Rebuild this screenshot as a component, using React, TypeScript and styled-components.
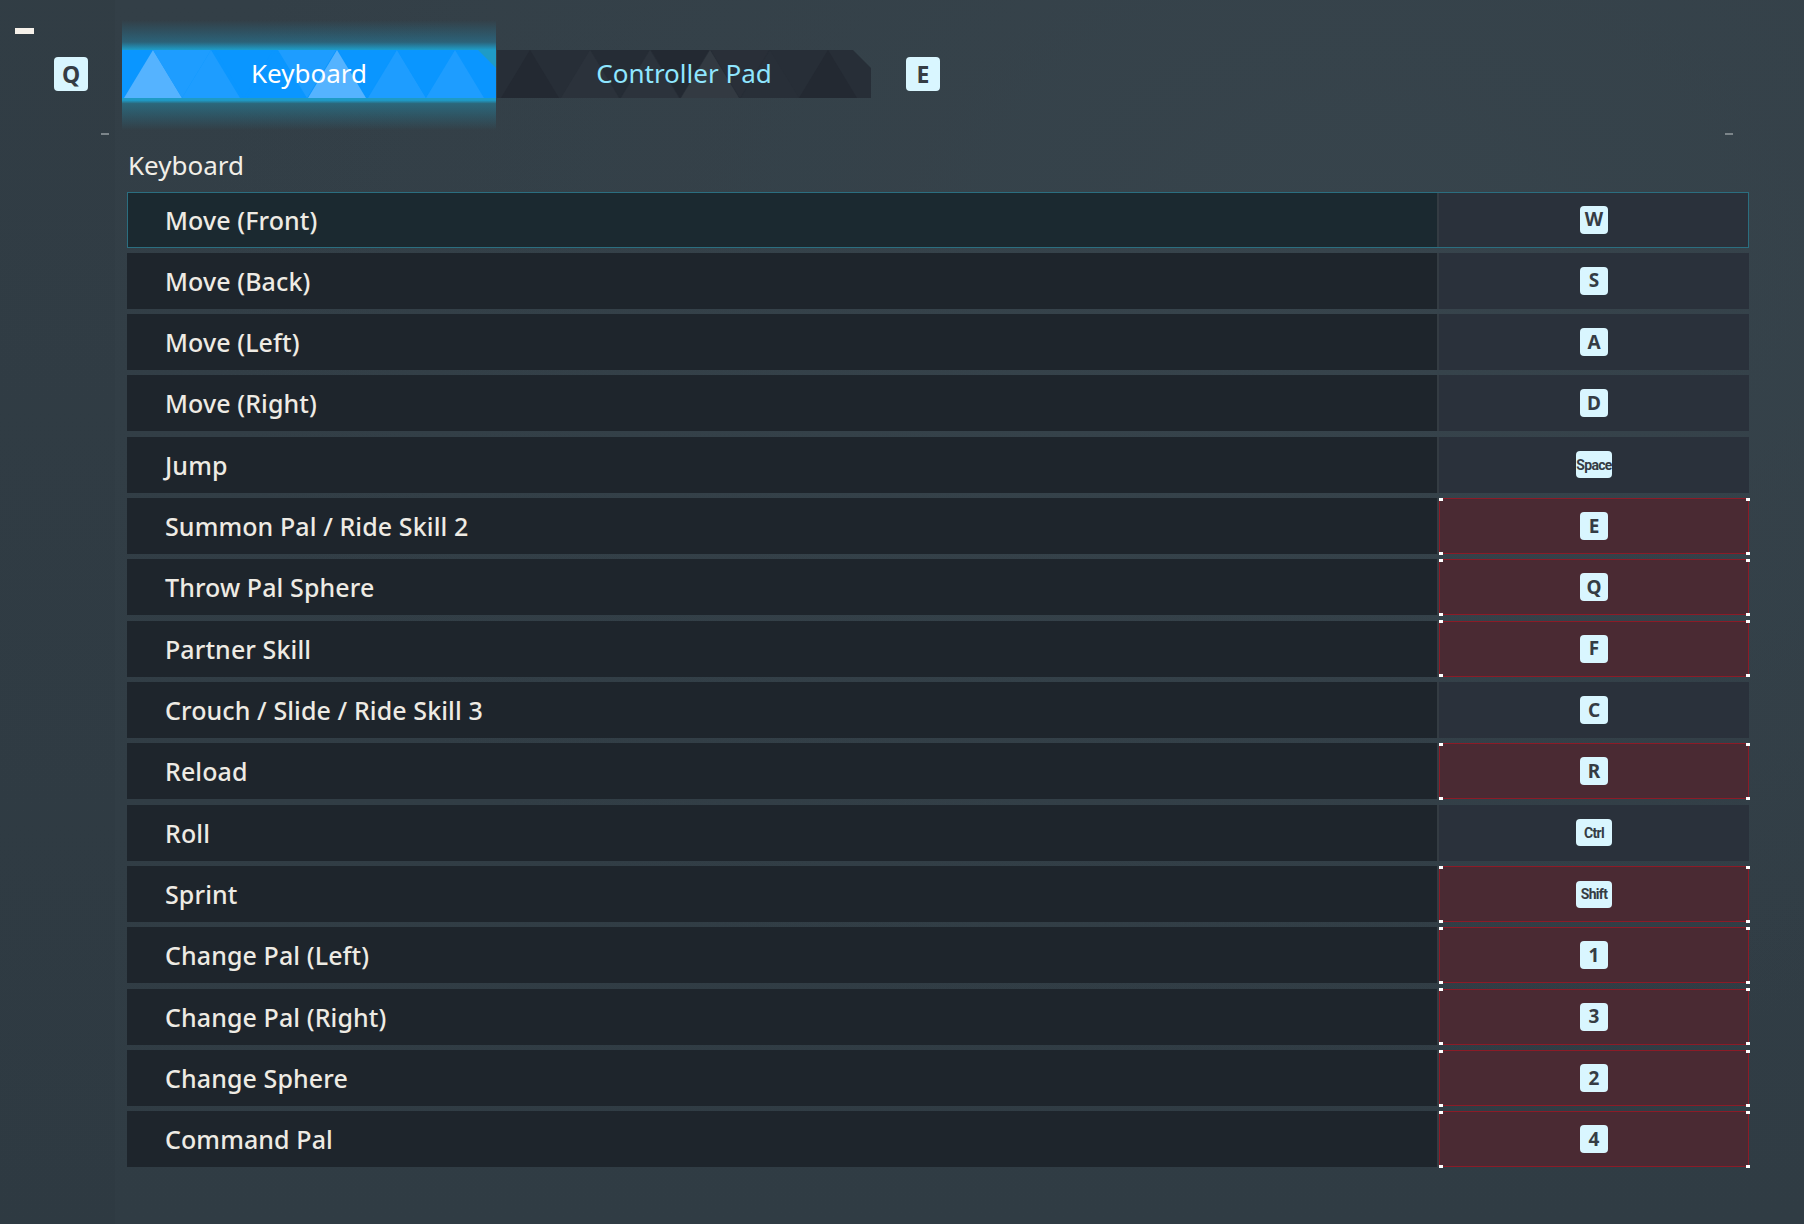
import React from "react";
import styled, { createGlobalStyle } from "styled-components";

interface Binding {
  label: string;
  key: string;
  conflict?: boolean;
}

const bindings: Binding[] = [
  { label: "Move (Front)", key: "W" },
  { label: "Move (Back)", key: "S" },
  { label: "Move (Left)", key: "A" },
  { label: "Move (Right)", key: "D" },
  { label: "Jump", key: "Space" },
  { label: "Summon Pal / Ride Skill 2", key: "E", conflict: true },
  { label: "Throw Pal Sphere", key: "Q", conflict: true },
  { label: "Partner Skill", key: "F", conflict: true },
  { label: "Crouch / Slide / Ride Skill 3", key: "C" },
  { label: "Reload", key: "R", conflict: true },
  { label: "Roll", key: "Ctrl" },
  { label: "Sprint", key: "Shift", conflict: true },
  { label: "Change Pal (Left)", key: "1", conflict: true },
  { label: "Change Pal (Right)", key: "3", conflict: true },
  { label: "Change Sphere", key: "2", conflict: true },
  { label: "Command Pal", key: "4", conflict: true },
];

// triangle strip behind a tab: [apex x, fill, pointing up]
type Tri = [number, string, boolean];

const activeTris: Tri[] = [
  [31, "#55b3ff", true],
  [60, "#1e9dff", false],
  [89, "#1e9dff", true],
  [122, "#0a96ff", false],
  [154, "#0a96ff", true],
  [185, "#1e9dff", false],
  [215, "#55b3ff", true],
  [245, "#0a96ff", false],
  [275, "#1e9dff", true],
  [304, "#0a96ff", false],
  [333, "#1e9dff", true],
];

const idleTris: Tri[] = [
  [33, "#232932", true],
  [93, "#2b323b", true],
  [123, "#252c35", false],
  [153, "#2c333c", true],
  [183, "#232932", false],
  [213, "#333a42", true],
  [243, "#292f38", false],
  [273, "#282f38", true],
  [331, "#232932", true],
];

const GlobalStyle = createGlobalStyle`
  html, body {
    margin: 0;
    padding: 0;
    background: #313d45;
  }
  body {
    font-family: "Noto Sans", "Open Sans", sans-serif;
  }
`;

const Page = styled.div`
  width: 1804px;
  height: 1224px;
  box-sizing: border-box;
  padding-top: 28px;
  display: flex;
  flex-direction: column;
  overflow: hidden;
  background:
    linear-gradient(90deg, rgba(0, 0, 0, 0.035) 0 115px, transparent 115px),
    radial-gradient(ellipse at 75% 20%, #37444c 0%, transparent 60%),
    linear-gradient(180deg, #333f47 0%, #303c44 100%);
`;

const TopDash = styled.div`
  width: 19px;
  height: 6px;
  margin-left: 15px;
  background: #f6f1ea;
`;

const TabBar = styled.div`
  display: flex;
  align-items: center;
  height: 48px;
  margin-top: 16px;
  padding-left: 54px;
`;

const KeyCap = styled.span<{ $size: "lg" | "md" | "wide" }>`
  display: inline-flex;
  align-items: center;
  justify-content: center;
  box-sizing: border-box;
  width: ${(p) => (p.$size === "lg" ? 34 : p.$size === "wide" ? 36 : 28)}px;
  height: ${(p) => (p.$size === "lg" ? 34 : p.$size === "wide" ? 27 : 28)}px;
  border-radius: 4px;
  background: #d9f6ff;
  color: #353c44;
  font-family: ${(p) =>
    p.$size === "wide" ? `Roboto, "Noto Sans", sans-serif` : `"Noto Sans", sans-serif`};
  font-weight: 700;
  font-size: ${(p) => (p.$size === "lg" ? 23 : p.$size === "wide" ? 14 : 19)}px;
  letter-spacing: ${(p) => (p.$size === "wide" ? -0.7 : 0)}px;
  line-height: 1;
  white-space: nowrap;
  overflow: hidden;
`;

const Tabs = styled.div`
  display: flex;
  gap: 1px;
  margin: 0 35px 0 34px;
`;

const Tab = styled.div<{ $active?: boolean }>`
  position: relative;
  width: 374px;
  height: 48px;
  display: flex;
  align-items: center;
  justify-content: center;

  &::before {
    content: "";
    position: absolute;
    left: 0;
    right: 0;
    top: -30px;
    bottom: -32px;
    display: ${(p) => (p.$active ? "block" : "none")};
    background: linear-gradient(
      180deg,
      rgba(40, 150, 190, 0) 0%,
      rgba(34, 140, 180, 0.45) 20%,
      #1f9bc6 27%,
      #1f9bc6 73%,
      rgba(40, 120, 145, 0.7) 76%,
      rgba(50, 90, 105, 0) 100%
    );
  }
`;

const TabFace = styled.div<{ $active?: boolean }>`
  position: absolute;
  inset: 0;
  background: ${(p) => (p.$active ? "#0a96ff" : "#272e37")};
  clip-path: polygon(0 0, calc(100% - 18px) 0, 100% 18px, 100% 100%, 0 100%);

  svg {
    display: block;
    width: 100%;
    height: 100%;
  }
`;

const TabLabel = styled.span<{ $active?: boolean }>`
  position: relative;
  top: -1px;
  font-size: 26px;
  font-weight: 400;
  color: ${(p) => (p.$active ? "#ffffff" : "#8fe6ff")};
`;

const TickRow = styled.div`
  display: flex;
  justify-content: space-between;
  margin: 35px 0 0;
  padding: 0 71px 0 101px;
`;

const Tick = styled.span`
  width: 8px;
  height: 2px;
  background: #7c858a;
`;

const Panel = styled.section`
  display: flex;
  flex-direction: column;
  padding: 0 55px 0 127px;
`;

const Heading = styled.h2`
  margin: 14px 0 10.5px 1px;
  font-size: 26px;
  line-height: 32px;
  font-weight: 400;
  color: #f1eee7;
`;

const Rows = styled.div`
  display: flex;
  flex-direction: column;
  gap: 5.33px;
`;

const Row = styled.div<{ $selected?: boolean }>`
  position: relative;
  display: flex;
  gap: 2px;
  height: 56px;
  background: #343c43;

  &::after {
    content: "";
    position: absolute;
    inset: 0;
    display: ${(p) => (p.$selected ? "block" : "none")};
    border: 1.5px solid #2b6e80;
    pointer-events: none;
  }
`;

const LabelCell = styled.div<{ $selected?: boolean }>`
  width: 1310px;
  display: flex;
  align-items: center;
  padding-left: 38px;
  box-sizing: border-box;
  background: ${(p) => (p.$selected ? "#1b2930" : "#1e252c")};
  color: #eeebe4;
  font-size: 25px;
  font-weight: 500;
  letter-spacing: 0.1px;
`;

const KeyCell = styled.div<{ $conflict?: boolean }>`
  position: relative;
  flex: 1;
  display: flex;
  align-items: center;
  justify-content: center;
  box-sizing: border-box;
  background: ${(p) => (p.$conflict ? "#4a2a33" : "#2a313b")};
  border: ${(p) => (p.$conflict ? "1.5px solid #8c1b27" : "none")};

  &::after {
    content: "";
    position: absolute;
    inset: -1.5px;
    display: ${(p) => (p.$conflict ? "block" : "none")};
    pointer-events: none;
    background:
      linear-gradient(#fff, #fff) 0 0 / 4px 3px no-repeat,
      linear-gradient(#fff, #fff) 100% 0 / 4px 3px no-repeat,
      linear-gradient(#fff, #fff) 0 100% / 4px 3px no-repeat,
      linear-gradient(#fff, #fff) 100% 100% / 4px 3px no-repeat;
  }
`;

const TriStrip: React.FC<{ tris: Tri[] }> = ({ tris }) => (
  <svg viewBox="0 0 374 48" preserveAspectRatio="none">
    {tris.map(([x, fill, up], i) => (
      <polygon
        key={i}
        fill={fill}
        points={
          up
            ? `${x},0 ${x + 29},48 ${x - 29},48`
            : `${x - 29},0 ${x + 29},0 ${x},48`
        }
      />
    ))}
  </svg>
);

const capSize = (key: string): "md" | "wide" => (key.length > 1 ? "wide" : "md");

export default function App() {
  return (
    <>
      <GlobalStyle />
      <Page>
        <TopDash />
        <TabBar>
          <KeyCap $size="lg">Q</KeyCap>
          <Tabs>
            <Tab $active>
              <TabFace $active>
                <TriStrip tris={activeTris} />
              </TabFace>
              <TabLabel $active>Keyboard</TabLabel>
            </Tab>
            <Tab>
              <TabFace>
                <TriStrip tris={idleTris} />
              </TabFace>
              <TabLabel>Controller Pad</TabLabel>
            </Tab>
          </Tabs>
          <KeyCap $size="lg">E</KeyCap>
        </TabBar>

        <TickRow>
          <Tick />
          <Tick />
        </TickRow>

        <Panel>
          <Heading>Keyboard</Heading>
          <Rows>
            {bindings.map((b, i) => (
              <Row key={b.label} $selected={i === 0}>
                <LabelCell $selected={i === 0}>{b.label}</LabelCell>
                <KeyCell $conflict={b.conflict}>
                  <KeyCap $size={capSize(b.key)}>{b.key}</KeyCap>
                </KeyCell>
              </Row>
            ))}
          </Rows>
        </Panel>
      </Page>
    </>
  );
}
